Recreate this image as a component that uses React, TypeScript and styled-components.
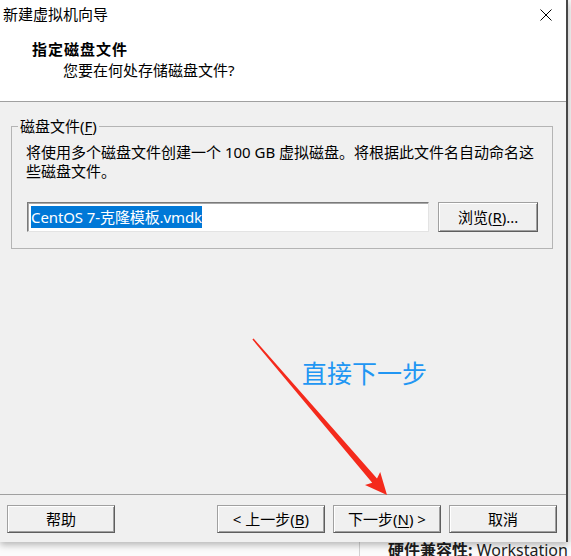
import React from "react";
import styled, { createGlobalStyle } from "styled-components";

const FONT = `"Noto Sans", "Noto Sans CJK SC", sans-serif`;

const GlobalStyle = createGlobalStyle`
  html, body { margin: 0; padding: 0; background: #f4f4f4; }
  #root { width: 571px; height: 556px; overflow: hidden; }
  * { box-sizing: border-box; }
`;

const Screen = styled.div`
  position: relative;
  width: 571px;
  height: 556px;
  overflow: hidden;
  background: #f6f6f6;
  font-family: ${FONT};
  color: #000;
  display: flex;
  flex-direction: column;
`;

const Dialog = styled.div`
  position: relative;
  z-index: 1;
  width: 568px;
  height: 542px;
  flex: none;
  display: flex;
  flex-direction: column;
  background: #f0f0f0;
  border-right: 2px solid #474747;
  box-shadow: 0 3px 7px rgba(0, 0, 0, 0.28);
`;

const TopArea = styled.div`
  height: 102px;
  flex: none;
  background: #fff;
  border-bottom: 1px solid #a0a0a0;
  display: flex;
  flex-direction: column;
`;

const TitleBar = styled.div`
  height: 29px;
  display: flex;
  align-items: center;
  justify-content: space-between;
  padding: 0 14px 0 3px;
`;

const TitleText = styled.span`
  font-size: 15px;
  line-height: 29px;
  color: #000;
`;

const CloseIcon = styled.svg`
  width: 12px;
  height: 12px;
  display: block;
`;

const Header = styled.div`
  padding-top: 10px;
  display: flex;
  flex-direction: column;
`;

const HeaderTitle = styled.div`
  padding-left: 32px;
  font-size: 15px;
  font-weight: 700;
  letter-spacing: 1px;
  line-height: 20px;
`;

const HeaderSubtitle = styled.div`
  padding-left: 63px;
  font-size: 15px;
  line-height: 20px;
  margin-top: 1px;
`;

const Body = styled.div`
  flex: 1;
  padding: 15px 13px 0 11px;
`;

const GroupBox = styled.fieldset`
  margin: 0;
  padding: 8px 14px 16px 6px;
  border: 1px solid #b4b4b4;
  min-inline-size: 0;
`;

const GroupLegend = styled.legend`
  padding: 0 2px;
  font-size: 15px;
  line-height: 18px;
`;

const GroupContent = styled.div`
  padding-left: 8px;
  display: flex;
  flex-direction: column;
`;

const Description = styled.p`
  margin: 0;
  font-size: 15px;
  line-height: 19px;
`;

const DescLine = styled.span`
  display: block;
  white-space: nowrap;
`;

const FileRow = styled.div`
  margin-top: 21px;
  margin-left: 1px;
  display: flex;
  gap: 9px;
  align-items: flex-start;
`;

const FileInput = styled.div`
  width: 403px;
  height: 30px;
  background: #fff;
  border: 1px solid;
  border-color: #7a7a7a #e3e3e3 #e3e3e3 #7a7a7a;
  box-shadow: inset 1px 1px 0 #a8a8a8;
  padding: 0 0 0 3px;
  display: flex;
  align-items: center;
`;

const Selected = styled.span`
  display: inline-block;
  background: #0078d7;
  color: #fff;
  font-size: 15px;
  line-height: 22px;
  letter-spacing: -0.1px;
  white-space: nowrap;
  margin-top: -1px;
`;

const Button = styled.button<{ $w?: number; $h?: number }>`
  width: ${(p) => p.$w ?? 108}px;
  height: ${(p) => p.$h ?? 28}px;
  padding: 0;
  margin: 0;
  background: #f0f0f0;
  border: 1px solid;
  border-color: #a0a0a0 #5e5e5e #5e5e5e #a0a0a0;
  box-shadow: inset 1px 1px 0 #fff, inset -1px -1px 0 #a0a0a0;
  font-family: ${FONT};
  font-size: 15px;
  line-height: 20px;
  color: #000;
  display: flex;
  align-items: center;
  justify-content: center;
  white-space: pre;
`;

const Footer = styled.div`
  height: 48px;
  flex: none;
  border-top: 1px solid #a0a0a0;
  padding: 10px 9px 0 7px;
  display: flex;
  align-items: flex-start;
`;

const NavGroup = styled.div`
  margin-left: auto;
  display: flex;
  gap: 8px;
`;

const U = styled.span`
  text-decoration: underline;
  text-underline-offset: 2px;
`;

const BackRow = styled.div`
  height: 14px;
  flex: none;
  display: flex;
  padding-left: 359px;
  overflow: hidden;
  background: #fbfbfb;
`;

const BackPane = styled.div`
  border-left: 1px solid #d2d2d2;
  padding-left: 28px;
  font-size: 16px;
  line-height: 16px;
  color: #1e1e1e;
  white-space: nowrap;
`;

const BackLabel = styled.b`
  font-weight: 700;
`;

const Annotation = styled.div`
  position: absolute;
  z-index: 2;
  left: 302px;
  top: 357px;
  font-family: "Noto Sans CJK SC", sans-serif;
  font-size: 25px;
  line-height: 30px;
  color: #2196f3;
  white-space: nowrap;
`;

const ArrowLayer = styled.svg`
  position: absolute;
  z-index: 3;
  left: 0;
  top: 0;
  width: 571px;
  height: 556px;
  pointer-events: none;
`;

export default function App() {
  return (
    <>
      <GlobalStyle />
      <Screen>
        <Dialog>
          <TopArea>
            <TitleBar>
              <TitleText>新建虚拟机向导</TitleText>
              <CloseIcon viewBox="0 0 12 12">
                <path d="M0.5 0.5 L11.5 11.5 M11.5 0.5 L0.5 11.5" stroke="#000" strokeWidth="1" />
              </CloseIcon>
            </TitleBar>
            <Header>
              <HeaderTitle>指定磁盘文件</HeaderTitle>
              <HeaderSubtitle>您要在何处存储磁盘文件?</HeaderSubtitle>
            </Header>
          </TopArea>
          <Body>
            <GroupBox>
              <GroupLegend>
                磁盘文件(<U>F</U>)
              </GroupLegend>
              <GroupContent>
                <Description>
                  <DescLine>将使用多个磁盘文件创建一个 100 GB 虚拟磁盘。将根据此文件名自动命名这</DescLine>
                  <DescLine>些磁盘文件。</DescLine>
                </Description>
                <FileRow>
                  <FileInput>
                    <Selected>CentOS 7-克隆模板.vmdk</Selected>
                  </FileInput>
                  <Button $w={100} $h={30}>
                    浏览(<U>R</U>)...
                  </Button>
                </FileRow>
              </GroupContent>
            </GroupBox>
          </Body>
          <Footer>
            <Button>帮助</Button>
            <NavGroup>
              <Button>
                {"< 上一步("}
                <U>B</U>)
              </Button>
              <Button>
                下一步(<U>N</U>){" >"}
              </Button>
              <Button>取消</Button>
            </NavGroup>
          </Footer>
        </Dialog>
        <BackRow>
          <BackPane>
            <BackLabel>硬件兼容性:</BackLabel> Workstation
          </BackPane>
        </BackRow>
        <Annotation>直接下一步</Annotation>
        <ArrowLayer viewBox="0 0 571 556">
          <polygon
            points="252.4,339.5 372.2,482.8 365,484.9 387,495 380.2,471.9 377,478.6 253.6,338.5"
            fill="#f42a1c"
          />
        </ArrowLayer>
      </Screen>
    </>
  );
}
